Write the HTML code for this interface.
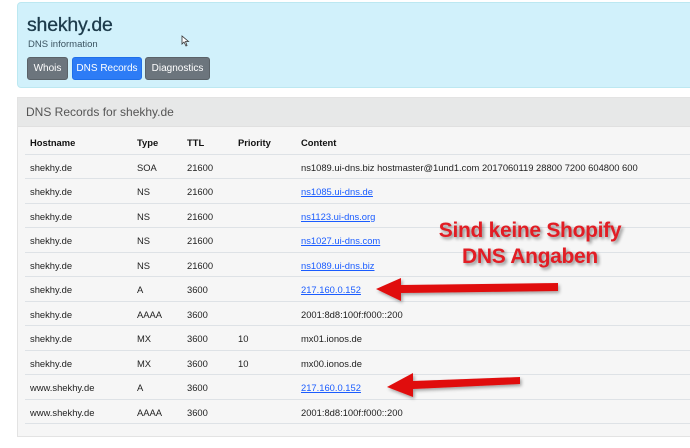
<!DOCTYPE html>
<html><head><meta charset="utf-8"><style>
*{box-sizing:border-box;margin:0;padding:0}
body{width:690px;height:448px;background:#fff;font-family:"Liberation Sans",sans-serif;position:relative;overflow:hidden;color:#212529}
.jb{position:absolute;left:17px;top:2px;width:680px;height:86px;background:#d1f1fb;border:1px solid #bce8f1;border-radius:4px}
.jb h1{position:absolute;left:9px;top:11px;font-size:19.5px;font-weight:500;color:#1c3a4a;letter-spacing:-0.2px;-webkit-text-stroke:0.3px #1c3a4a}
.jb .sub{position:absolute;left:10px;top:36px;font-size:9.5px;color:#3b5461}
.btn{position:absolute;top:54px;height:23px;border-radius:3px;color:#fff;font-size:10px;line-height:22px;text-align:center;background:#6c757d;border:1px solid #5a6268}
.card{position:absolute;left:17px;top:97px;width:680px;height:340px;background:#f6f6f6;border:1px solid #e3e3e3}
.ch{height:29px;background:#e7e8e8;border-bottom:1px solid #e0e0e0;font-size:12px;color:#555;padding:7px 0 0 8px}
.row{position:absolute;left:7px;width:670px;height:24.5px;border-bottom:1px solid #dee2e6;font-size:9.4px;color:#222}
.row span{position:absolute;top:7px}
.th span{font-weight:bold;color:#111}
a{color:#1a5cff;text-decoration:underline}
.c1{left:5px}.c2{left:112px}.c3{left:162px}.c4{left:213px}.c5{left:276px}
.note{position:absolute;left:420px;top:218px;width:220px;text-align:center;color:#e21d24;font-weight:bold;font-size:21px;line-height:26px;text-shadow:2px 2px 3px rgba(0,0,0,.45);letter-spacing:-0.3px}
</style></head><body>
<div class="jb"><h1>shekhy.de</h1><div class="sub">DNS information</div>
<div class="btn" style="left:9px;width:41px">Whois</div>
<div class="btn" style="left:54px;width:70px;background:#2d7cf6;border-color:#1f6fe8">DNS Records</div>
<div class="btn" style="left:127px;width:65px">Diagnostics</div>
</div>
<svg style="position:absolute;left:181px;top:35px" width="10" height="12"><path d="M1 1 L1 9 L3 7 L5 11 L6 10.5 L4.5 6.5 L7.5 6.5 Z" fill="#fff" stroke="#333" stroke-width="0.8"/></svg>
<div class="card"><div class="ch">DNS Records for shekhy.de</div>
<div class="row th" style="top:32px"><span class="c1">Hostname</span><span class="c2">Type</span><span class="c3">TTL</span><span class="c4">Priority</span><span class="c5">Content</span></div>
<div class="row" style="top:56.5px"><span class="c1">shekhy.de</span><span class="c2">SOA</span><span class="c3">21600</span><span class="c5">ns1089.ui-dns.biz hostmaster@1und1.com 2017060119 28800 7200 604800 600</span></div>
<div class="row" style="top:81px"><span class="c1">shekhy.de</span><span class="c2">NS</span><span class="c3">21600</span><span class="c5"><a>ns1085.ui-dns.de</a></span></div>
<div class="row" style="top:105.5px"><span class="c1">shekhy.de</span><span class="c2">NS</span><span class="c3">21600</span><span class="c5"><a>ns1123.ui-dns.org</a></span></div>
<div class="row" style="top:130px"><span class="c1">shekhy.de</span><span class="c2">NS</span><span class="c3">21600</span><span class="c5"><a>ns1027.ui-dns.com</a></span></div>
<div class="row" style="top:154.5px"><span class="c1">shekhy.de</span><span class="c2">NS</span><span class="c3">21600</span><span class="c5"><a>ns1089.ui-dns.biz</a></span></div>
<div class="row" style="top:179px"><span class="c1">shekhy.de</span><span class="c2">A</span><span class="c3">3600</span><span class="c5"><a>217.160.0.152</a></span></div>
<div class="row" style="top:203.5px"><span class="c1">shekhy.de</span><span class="c2">AAAA</span><span class="c3">3600</span><span class="c5">2001:8d8:100f:f000::200</span></div>
<div class="row" style="top:228px"><span class="c1">shekhy.de</span><span class="c2">MX</span><span class="c3">3600</span><span class="c4">10</span><span class="c5">mx01.ionos.de</span></div>
<div class="row" style="top:252.5px"><span class="c1">shekhy.de</span><span class="c2">MX</span><span class="c3">3600</span><span class="c4">10</span><span class="c5">mx00.ionos.de</span></div>
<div class="row" style="top:277px"><span class="c1">www.shekhy.de</span><span class="c2">A</span><span class="c3">3600</span><span class="c5"><a>217.160.0.152</a></span></div>
<div class="row" style="top:301.5px"><span class="c1">www.shekhy.de</span><span class="c2">AAAA</span><span class="c3">3600</span><span class="c5">2001:8d8:100f:f000::200</span></div>
</div>
<div class="note">Sind keine Shopify<br>DNS Angaben</div>
<svg style="position:absolute;left:0;top:0" width="690" height="448">
<defs><filter id="s"><feDropShadow dx="1.5" dy="2" stdDeviation="1.5" flood-opacity="0.35"/></filter></defs>
<g fill="#e00a0a" filter="url(#s)">
<path d="M376 289 L401 278 L401 285 L558 283 L558 291 L401 293 L401 301 Z"/>
<path d="M387 387 L413 373 L413 381 L520 377 L520 384 L413 389 L413 397 Z"/>
</g></svg>
</body></html>
